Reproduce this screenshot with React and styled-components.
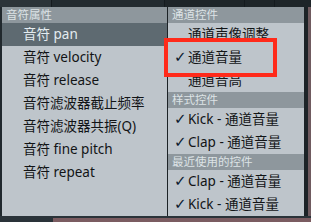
import styled, { createGlobalStyle } from 'styled-components';

const Global = createGlobalStyle`
  html, body { margin: 0; padding: 0; background: #1f272c; }
  body { font-family: "Noto Sans", "Noto Sans CJK SC", sans-serif; }
`;

const leftItems = [
  { label: '音符 pan', selected: true },
  { label: '音符 velocity' },
  { label: '音符 release' },
  { label: '音符滤波器截止频率' },
  { label: '音符滤波器共振(Q)' },
  { label: '音符 fine pitch' },
  { label: '音符 repeat' },
];

const rightGroups = [
  {
    title: '通道控件',
    items: [
      { label: '通道声像调整' },
      { label: '通道音量', checked: true },
      { label: '通道音高' },
    ],
  },
  {
    title: '样式控件',
    items: [
      { label: 'Kick - 通道音量', checked: true },
      { label: 'Clap - 通道音量', checked: true },
    ],
  },
  {
    title: '最近使用的控件',
    items: [
      { label: 'Clap - 通道音量', checked: true },
      { label: 'Kick - 通道音量', checked: true },
    ],
  },
];

const App = () => {
  return (
    <Page>
      <Global />
      <TopStrip>
        <TopCell $w={52} $tone="#2c3439" />
        <TopCell $w={113} $tone="#232b30" />
        <TopCell $w={80} $tone="#1e2529" />
        <TopCell $w={30} $tone="#1e2529" />
        <TopCell $w={36} $tone="#1e2529" />
      </TopStrip>
      <Middle>
        <LeftEdge />
        <Menu>
          <Column $w={165}>
            <Header>音符属性</Header>
            {leftItems.map(item => (
              <LeftItem key={item.label} $selected={item.selected}>
                {item.label}
              </LeftItem>
            ))}
          </Column>
          <Divider />
          <Column $w={136}>
            {rightGroups.map(group => (
              <Group key={group.title}>
                <Header>{group.title}</Header>
                {group.items.map((item, i) => (
                  <RightItem key={i}>
                    <Check>{item.checked ? '✓' : ''}</Check>
                    {item.label}
                  </RightItem>
                ))}
              </Group>
            ))}
          </Column>
          <Highlight />
        </Menu>
        <RightEdge>
          <span />
        </RightEdge>
      </Middle>
      <BottomStrip>
        <BottomRight />
      </BottomStrip>
    </Page>
  );
};

export default App;

const Page = styled.div`
  width: 311px;
  height: 222px;
  overflow: hidden;
  display: flex;
  flex-direction: column;
  background: #1f272c;
`;

const TopStrip = styled.div`
  height: 7px;
  display: flex;
  gap: 1px;
  background: #151b1f;
`;

const TopCell = styled.div`
  width: ${p => p.$w}px;
  background: ${p => p.$tone};
`;

const Middle = styled.div`
  display: flex;
  height: 209px;
`;

const LeftEdge = styled.div`
  width: 2px;
  background: #20282d;
`;

const Menu = styled.div`
  position: relative;
  width: 302px;
  display: flex;
  background: #bec5cb;
  color: #121416;
`;

const Column = styled.div`
  width: ${p => p.$w}px;
  display: flex;
  flex-direction: column;
`;

const Divider = styled.div`
  width: 1px;
  background: #1c2226;
`;

const Group = styled.div`
  display: flex;
  flex-direction: column;
`;

const Header = styled.div`
  height: 16px;
  line-height: 16px;
  padding-left: 4px;
  font-size: 11.5px;
  color: #dde3e6;
  background: #8e979d;
  white-space: nowrap;
`;

const LeftItem = styled.div`
  height: 23px;
  line-height: 23px;
  padding-left: 21px;
  font-size: 13.5px;
  white-space: nowrap;
  background: ${p => (p.$selected ? '#5e6a71' : 'transparent')};
  color: ${p => (p.$selected ? '#e4ecf0' : '#121416')};
`;

const RightItem = styled.div`
  height: 23px;
  line-height: 23px;
  padding-left: 6px;
  font-size: 13.5px;
  white-space: nowrap;
  display: flex;
`;

const Check = styled.span`
  width: 14px;
  font-family: "DejaVu Sans", sans-serif;
  font-size: 15px;
  color: #0c1a2e;
`;

const Highlight = styled.div`
  position: absolute;
  left: 162px;
  top: 31px;
  width: 105px;
  height: 31px;
  border: 4px solid #ff2a1a;
  pointer-events: none;
`;

const RightEdge = styled.div`
  flex: 1;
  display: flex;
  background: #1c2327;
  padding-left: 4px;
  span {
    flex: 1;
    background: #6f5a5f;
  }
`;

const BottomStrip = styled.div`
  flex: 1;
  display: flex;
  flex-direction: column;
  justify-content: flex-end;
  background: #2a3339;
`;

const BottomRight = styled.div`
  height: 4px;
  margin-left: 53px;
  background: #7b5c61;
`;
